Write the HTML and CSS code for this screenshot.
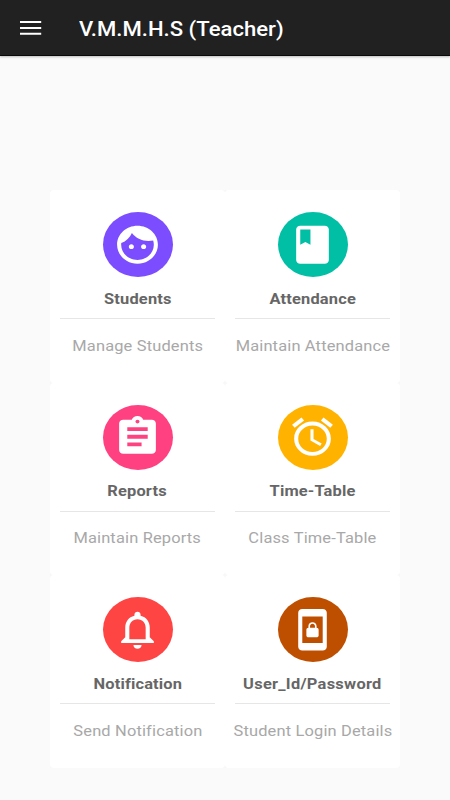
FILE: index.html
```html
<!DOCTYPE html>
<html lang="en">
<head>
<meta charset="utf-8">
<title>V.M.M.H.S (Teacher)</title>
<link rel="stylesheet" href="styles.css">
</head>
<body>
<header class="app-bar">
  <svg class="menu" viewBox="0 0 22 14" aria-label="Menu"><path d="M0 0h21.2v2H0zM0 5.9h21.2v2H0zM0 11.8h21.2v2H0z"/></svg>
  <h1>V.M.M.H.S (Teacher)</h1>
</header>
<main class="grid">
  <section class="card">
    <div class="badge purple"><svg viewBox="0 0 24 24" preserveAspectRatio="none"><path d="M9 11.75c-.69 0-1.25.56-1.25 1.25s.56 1.25 1.25 1.25 1.25-.56 1.25-1.25-.56-1.25-1.25-1.25zm6 0c-.69 0-1.25.56-1.25 1.25s.56 1.25 1.25 1.25 1.25-.56 1.25-1.25-.56-1.25-1.25-1.25zM12 2C6.48 2 2 6.48 2 12s4.48 10 10 10 10-4.48 10-10S17.52 2 12 2zm0 18c-4.41 0-8-3.59-8-8 0-.29.02-.58.05-.86 2.36-1.05 4.23-2.98 5.21-5.37C11.07 8.33 14.05 10 17.42 10c.78 0 1.53-.09 2.25-.26.21.71.33 1.47.33 2.26 0 4.41-3.59 8-8 8z"/></svg></div>
    <h2>Students</h2>
    <hr>
    <p>Manage Students</p>
  </section>
  <section class="card">
    <div class="badge teal"><svg viewBox="0 0 24 24" preserveAspectRatio="none"><path d="M18 2H6c-1.1 0-2 .9-2 2v16c0 1.1.9 2 2 2h12c1.1 0 2-.9 2-2V4c0-1.1-.9-2-2-2zM6 4h5v8l-2.5-1.5L6 12V4z"/></svg></div>
    <h2>Attendance</h2>
    <hr>
    <p>Maintain Attendance</p>
  </section>
  <section class="card">
    <div class="badge pink"><svg viewBox="0 0 24 24" preserveAspectRatio="none"><path d="M19 3h-4.18C14.4 1.84 13.3 1 12 1c-1.3 0-2.4.84-2.82 2H5c-1.1 0-2 .9-2 2v14c0 1.1.9 2 2 2h14c1.1 0 2-.9 2-2V5c0-1.1-.9-2-2-2zm-7 0c.55 0 1 .45 1 1s-.45 1-1 1-1-.45-1-1 .45-1 1-1zm2 14H7v-2h7v2zm3-4H7v-2h10v2zm0-4H7V7h10v2z"/></svg></div>
    <h2>Reports</h2>
    <hr>
    <p>Maintain Reports</p>
  </section>
  <section class="card">
    <div class="badge amber"><svg viewBox="0 0 24 24" preserveAspectRatio="none"><path d="M22 5.72l-4.6-3.86-1.29 1.53 4.6 3.86L22 5.72zM7.88 3.39L6.6 1.86 2 5.71l1.29 1.53 4.59-3.85zM12.5 8H11v6l4.75 2.85.75-1.23-4-2.37V8zM12 4c-4.97 0-9 4.03-9 9s4.02 9 9 9c4.97 0 9-4.03 9-9s-4.03-9-9-9zm0 16c-3.87 0-7-3.13-7-7s3.13-7 7-7 7 3.13 7 7-3.13 7-7 7z"/></svg></div>
    <h2>Time-Table</h2>
    <hr>
    <p>Class Time-Table</p>
  </section>
  <section class="card">
    <div class="badge red"><svg viewBox="0 0 24 24" preserveAspectRatio="none"><path d="M12 22c1.1 0 2-.9 2-2h-4c0 1.1.9 2 2 2zm6-6v-5c0-3.07-1.63-5.64-4.5-6.32V4c0-.83-.67-1.5-1.5-1.5s-1.5.67-1.5 1.5v.68C7.64 5.36 6 7.92 6 11v5l-2 2v1h16v-1l-2-2zm-2 1H8v-6c0-2.48 1.51-4.5 4-4.5s4 2.02 4 4.5v6z"/></svg></div>
    <h2>Notification</h2>
    <hr>
    <p>Send Notification</p>
  </section>
  <section class="card">
    <div class="badge brown"><svg viewBox="0 0 24 24" preserveAspectRatio="none"><path d="M10 16h4c.55 0 1-.45 1-1v-3c0-.55-.45-1-1-1v-1c0-1.11-.9-2-2-2-1.11 0-2 .9-2 2v1c-.55 0-1 .45-1 1v3c0 .55.45 1 1 1zm.8-6c0-.66.54-1.2 1.2-1.2.66 0 1.2.54 1.2 1.2v1h-2.4v-1zM17 1H7c-1.1 0-2 .9-2 2v18c0 1.1.9 2 2 2h10c1.1 0 2-.9 2-2V3c0-1.1-.9-2-2-2zm0 18H7V5h10v14z"/></svg></div>
    <h2 class="wide">User_Id/Password</h2>
    <hr>
    <p>Student Login Details</p>
  </section>
</main>
</body>
</html>
```
FILE: styles.css
```css
* { box-sizing: border-box; }

body {
  margin: 0;
  height: 800px;
  background: #fafafa;
  font-family: Roboto, "Liberation Sans", sans-serif;
}

.app-bar {
  display: flex;
  align-items: center;
  height: 56px;
  padding-left: 20px;
  background: #212121;
  border-bottom: 1px solid #0a0a0a;
  box-shadow: 0 1px 2px rgba(0, 0, 0, .25);
}

.menu {
  width: 22px;
  height: 14px;
  margin-right: 37px;
  fill: #fff;
}

h1 {
  margin: 2px 0 0;
  color: #fff;
  font-size: 21px;
  line-height: 24px;
  font-weight: 500;
  white-space: nowrap;
  transform: scaleX(1.052);
  transform-origin: left;
}

.grid {
  display: grid;
  grid-template-columns: 175px 175px;
  grid-auto-rows: 192.5px;
  width: 350px;
  margin: 134px auto 0;
  background: #f8f8f8;
}

.card {
  display: flex;
  flex-direction: column;
  align-items: center;
  padding-top: 22px;
  background: #fff;
  border-radius: 4px;
}

.badge {
  display: flex;
  align-items: center;
  justify-content: center;
  flex: none;
  width: 70px;
  height: 65px;
  border-radius: 50%;
}

.badge svg {
  width: 49px;
  height: 45.5px;
  fill: #fff;
}

.purple { background: #7c4dff; }
.teal { background: #00bfa5; }
.pink { background: #ff4081; }
.amber { background: #ffb300; }
.red { background: #ff4444; }
.brown { background: #bf4f00; }

h2, p {
  margin: 0;
  font-size: 15.5px;
  line-height: 20px;
  letter-spacing: .15px;
  white-space: nowrap;
  transform: scaleX(1.06);
}

h2 {
  margin-top: 11.5px;
  color: #666;
  font-weight: 700;
}

.wide { letter-spacing: .25px; }

hr {
  width: 155px;
  height: 1px;
  margin: 9.5px 0 16.5px;
  border: 0;
  background: #e6e6e6;
}

p { color: #a8a8a8; }
```
